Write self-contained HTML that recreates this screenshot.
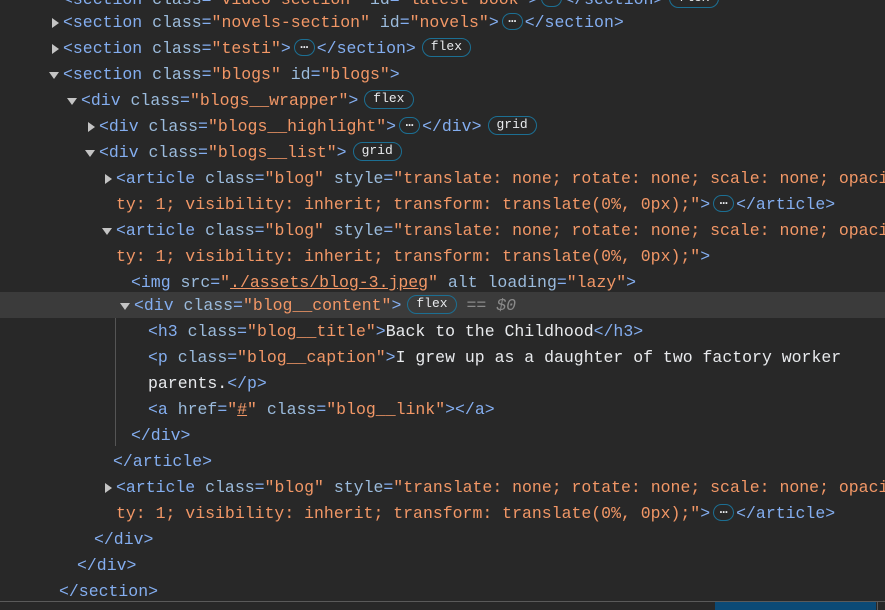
<!DOCTYPE html>
<html><head><meta charset="utf-8"><style>
body{margin:0;width:885px;height:610px;background:#282828;overflow:hidden;position:relative;font-family:"Liberation Mono",monospace;font-size:16.5px;}
.l{position:absolute;left:0;height:26px;line-height:26px;white-space:pre;color:#e8eaed;}
.t{color:#84aef0}.a{color:#9bbbdc}.v{color:#f29766}.x{color:#e8eaed}
.tri{position:absolute;width:0;height:0;}
.r{border-top:5px solid transparent;border-bottom:5px solid transparent;border-left:7px solid #c4c4c4;top:8px}
.d{border-left:5px solid transparent;border-right:5px solid transparent;border-top:7px solid #c4c4c4;top:10px}
.b{display:inline-block;border:1px solid #1c6f93;border-radius:10px;height:17px;line-height:16px;font-size:13px;padding:0 8px;color:#e8eaed;vertical-align:middle;margin:0 0 0 6px;position:relative;top:-1px}
.e{display:inline-block;border:1px solid #1c6f93;border-radius:9px;height:15px;line-height:10px;font-size:13px;width:19px;text-align:center;color:#e8eaed;vertical-align:middle;margin:0 2px 0 3px;position:relative;top:-1px;font-weight:bold}
.u{text-decoration:underline}
</style></head><body>
<div style="position:absolute;left:0;top:292px;width:885px;height:26px;background:#3b3b3b"></div>
<div style="position:absolute;left:115px;top:318px;width:1px;height:128px;background:#555"></div>

<div class="l" style="top:-13px;left:63px"><span class="t">&lt;section</span> <span class="a">class</span><span class="t">=</span><span class="v">"video-section"</span> <span class="a">id</span><span class="t">=</span><span class="v">"latest-book"</span><span class="t">&gt;</span><span class="e">…</span><span class="t">&lt;/section&gt;</span><span class="b">flex</span></div>

<div class="l" style="top:10px;left:63px"><i class="tri r" style="left:-11px"></i><span class="t">&lt;section</span> <span class="a">class</span><span class="t">=</span><span class="v">"novels-section"</span> <span class="a">id</span><span class="t">=</span><span class="v">"novels"</span><span class="t">&gt;</span><span class="e">…</span><span class="t">&lt;/section&gt;</span></div>

<div class="l" style="top:36px;left:63px"><i class="tri r" style="left:-11px"></i><span class="t">&lt;section</span> <span class="a">class</span><span class="t">=</span><span class="v">"testi"</span><span class="t">&gt;</span><span class="e">…</span><span class="t">&lt;/section&gt;</span><span class="b">flex</span></div>

<div class="l" style="top:62px;left:63px"><i class="tri d" style="left:-14px"></i><span class="t">&lt;section</span> <span class="a">class</span><span class="t">=</span><span class="v">"blogs"</span> <span class="a">id</span><span class="t">=</span><span class="v">"blogs"</span><span class="t">&gt;</span></div>

<div class="l" style="top:88px;left:81px"><i class="tri d" style="left:-14px"></i><span class="t">&lt;div</span> <span class="a">class</span><span class="t">=</span><span class="v">"blogs__wrapper"</span><span class="t">&gt;</span><span class="b">flex</span></div>

<div class="l" style="top:114px;left:99px"><i class="tri r" style="left:-11px"></i><span class="t">&lt;div</span> <span class="a">class</span><span class="t">=</span><span class="v">"blogs__highlight"</span><span class="t">&gt;</span><span class="e">…</span><span class="t">&lt;/div&gt;</span><span class="b">grid</span></div>

<div class="l" style="top:140px;left:99px"><i class="tri d" style="left:-14px"></i><span class="t">&lt;div</span> <span class="a">class</span><span class="t">=</span><span class="v">"blogs__list"</span><span class="t">&gt;</span><span class="b">grid</span></div>

<div class="l" style="top:166px;left:116px"><i class="tri r" style="left:-11px"></i><span class="t">&lt;article</span> <span class="a">class</span><span class="t">=</span><span class="v">"blog"</span> <span class="a">style</span><span class="t">=</span><span class="v">"translate: none; rotate: none; scale: none; opaci</span></div>
<div class="l" style="top:192px;left:116px"><span class="v">ty: 1; visibility: inherit; transform: translate(0%, 0px);"</span><span class="t">&gt;</span><span class="e">…</span><span class="t">&lt;/article&gt;</span></div>

<div class="l" style="top:218px;left:116px"><i class="tri d" style="left:-14px"></i><span class="t">&lt;article</span> <span class="a">class</span><span class="t">=</span><span class="v">"blog"</span> <span class="a">style</span><span class="t">=</span><span class="v">"translate: none; rotate: none; scale: none; opaci</span></div>
<div class="l" style="top:244px;left:116px"><span class="v">ty: 1; visibility: inherit; transform: translate(0%, 0px);"</span><span class="t">&gt;</span></div>

<div class="l" style="top:270px;left:131px"><span class="t">&lt;img</span> <span class="a">src</span><span class="t">=</span><span class="v">"<span class="u">./assets/blog-3.jpeg</span>"</span> <span class="a">alt</span> <span class="a">loading</span><span class="t">=</span><span class="v">"lazy"</span><span class="t">&gt;</span></div>

<div class="l" style="top:293px;left:134px"><i class="tri d" style="left:-14px"></i><span class="t">&lt;div</span> <span class="a">class</span><span class="t">=</span><span class="v">"blog__content"</span><span class="t">&gt;</span><span class="b">flex</span><span style="color:#8a8a8a"> == <i>$0</i></span></div>

<div class="l" style="top:319px;left:148px"><span class="t">&lt;h3</span> <span class="a">class</span><span class="t">=</span><span class="v">"blog__title"</span><span class="t">&gt;</span>Back to the Childhood<span class="t">&lt;/h3&gt;</span></div>
<div class="l" style="top:345px;left:148px"><span class="t">&lt;p</span> <span class="a">class</span><span class="t">=</span><span class="v">"blog__caption"</span><span class="t">&gt;</span>I grew up as a daughter of two factory worker</div>
<div class="l" style="top:371px;left:148px">parents.<span class="t">&lt;/p&gt;</span></div>
<div class="l" style="top:397px;left:148px"><span class="t">&lt;a</span> <span class="a">href</span><span class="t">=</span><span class="v">"<span class="u">#</span>"</span> <span class="a">class</span><span class="t">=</span><span class="v">"blog__link"</span><span class="t">&gt;&lt;/a&gt;</span></div>
<div class="l" style="top:423px;left:131px"><span class="t">&lt;/div&gt;</span></div>
<div class="l" style="top:449px;left:113px"><span class="t">&lt;/article&gt;</span></div>

<div class="l" style="top:475px;left:116px"><i class="tri r" style="left:-11px"></i><span class="t">&lt;article</span> <span class="a">class</span><span class="t">=</span><span class="v">"blog"</span> <span class="a">style</span><span class="t">=</span><span class="v">"translate: none; rotate: none; scale: none; opaci</span></div>
<div class="l" style="top:501px;left:116px"><span class="v">ty: 1; visibility: inherit; transform: translate(0%, 0px);"</span><span class="t">&gt;</span><span class="e">…</span><span class="t">&lt;/article&gt;</span></div>

<div class="l" style="top:527px;left:94px"><span class="t">&lt;/div&gt;</span></div>
<div class="l" style="top:553px;left:77px"><span class="t">&lt;/div&gt;</span></div>
<div class="l" style="top:579px;left:59px"><span class="t">&lt;/section&gt;</span></div>

<div style="position:absolute;left:0;top:601px;width:885px;height:1px;background:#5a5a5a"></div>
<div style="position:absolute;left:0;top:602px;width:885px;height:8px;background:#282828"></div>
<div style="position:absolute;left:715px;top:602px;width:161px;height:8px;background:#0b4a76"></div>
<div style="position:absolute;left:877px;top:602px;width:1px;height:8px;background:#5a5a5a"></div>
</body></html>
